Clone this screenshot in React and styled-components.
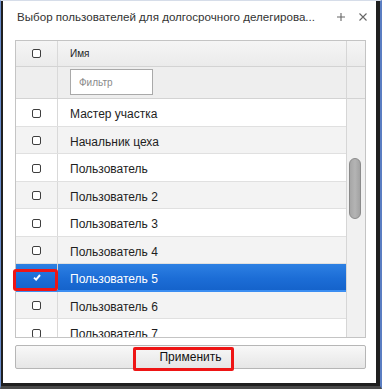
import React from 'react';
import styled, { createGlobalStyle } from 'styled-components';

const Global = createGlobalStyle`
  html, body { margin: 0; padding: 0; background: #fff; }
  body { font-family: "Liberation Sans", Arial, sans-serif; }
  *, *::before, *::after { box-sizing: border-box; }
`;

const Frame = styled.div`
  width: 382px;
  height: 389px;
  border-left: 1px solid #6a8dcc;
  border-top: 1px solid #d6dde9;
  border-right: 2px solid #5b7ec2;
  border-bottom: 3px solid #4a4a4a;
  background: #fff;
`;

const Window = styled.div`
  height: 100%;
  display: flex;
  flex-direction: column;
  border-left: 2px solid #1f1f1f;
  border-right: 4px solid #1f1f1f;
  border-bottom: 3px solid #1f1f1f;
  background: #fff;
`;

const TitleBar = styled.div`
  height: 39px;
  flex: none;
  display: flex;
  align-items: flex-start;
  padding: 8px 10px 0 14px;
`;

const Title = styled.div`
  flex: 1;
  font-size: 11.6px;
  line-height: 15px;
  color: #333;
  white-space: nowrap;
  overflow: hidden;
`;

const Tools = styled.div`
  display: flex;
  gap: 14px;
  padding-top: 4px;
  margin-right: -1px;
`;

const ToolIcon = styled.svg`
  width: 8px;
  height: 8px;
  display: block;
  stroke: #666;
  stroke-width: 1.1;
`;

const Grid = styled.div`
  margin: 0 10px 0 12px;
  height: 298px;
  flex: none;
  border: 1px solid #c4c4c4;
  display: flex;
  position: relative;
`;

const Main = styled.div`
  flex: 1;
  display: flex;
  flex-direction: column;
  border-right: 1px solid #d6d6d6;
  min-width: 0;
`;

const HeadRow = styled.div`
  height: 26px;
  flex: none;
  display: flex;
  background: linear-gradient(#f5f5f5, #ebebeb);
  border-bottom: 1px solid #d3d3d3;
`;

const FilterRow = styled.div`
  height: 32px;
  flex: none;
  display: flex;
  background: #eeeeee;
  border-bottom: 1px solid #d3d3d3;
`;

const CheckCell = styled.div`
  width: 42px;
  flex: none;
  display: flex;
  align-items: center;
  justify-content: center;
  border-right: 1px solid #d9d9d9;
  position: relative;
  padding-top: ${p => (p.$body ? '2px' : '0')};
`;

const NameCell = styled.div`
  flex: 1;
  display: flex;
  align-items: center;
  padding-left: 12px;
  font-size: ${p => (p.$head ? '10px' : '12px')};
  color: ${p => (p.$selected ? '#fff' : '#1e1e1e')};
  padding-top: ${p => (p.$head ? '0' : '4px')};
  white-space: nowrap;
`;

const FilterInput = styled.div`
  margin: 2px 0 0 12px;
  width: 83px;
  height: 26px;
  border: 1px solid #a9a9a9;
  background: #fff;
  font-size: 10px;
  color: #8a8a8a;
  display: flex;
  align-items: center;
  padding-left: 8px;
`;

const Body = styled.div`
  flex: 1;
  min-height: 0;
  clip-path: inset(0 -20px 0 -20px);
`;

const Row = styled.div`
  height: 27.5px;
  display: flex;
  border-bottom: ${p => (p.$selected ? '2px solid #3b8ef2' : '1px solid #e0e0e0')};
  background: ${p =>
    p.$selected
      ? 'linear-gradient(#2d80e3, #1c6dd6 55%, #1563cb)'
      : p.$odd
      ? '#f3f3f3'
      : '#ffffff'};
`;

const Box = styled.span`
  width: 9px;
  height: 9px;
  border: 1px solid #3e3e3e;
  border-radius: 2px;
  background: #fff;
  display: block;
`;

const Check = styled.svg`
  width: 8px;
  height: 7px;
  display: block;
  fill: none;
  stroke: #fff;
  stroke-width: 2;
`;

const Mark = styled.span`
  position: absolute;
  left: -3px;
  top: 5px;
  width: 45px;
  height: 22px;
  border: 3px solid #ee1515;
  border-radius: 3px;
  pointer-events: none;
`;

const ScrollCol = styled.div`
  width: 18px;
  flex: none;
  display: flex;
  flex-direction: column;
`;

const ScrollHead = styled.div`
  height: ${p => p.$h}px;
  flex: none;
  background: ${p => (p.$filter ? '#eeeeee' : 'linear-gradient(#f5f5f5, #ebebeb)')};
  border-bottom: 1px solid #d3d3d3;
`;

const Track = styled.div`
  flex: 1;
  background: #f1f1f1;
  padding: 59px 2px 0 2px;
`;

const Thumb = styled.div`
  height: 61px;
  width: 12px;
  border: 1px solid #8a8a8a;
  border-radius: 6px;
  background: linear-gradient(90deg, #a6a6a6, #b4b4b4 50%, #a2a2a2);
`;

const Footer = styled.div`
  padding: 7px 10px 0 12px;
`;

const Button = styled.div`
  position: relative;
  height: 24px;
  border: 1px solid #b6b6b6;
  border-radius: 2px;
  background: linear-gradient(#f8f8f8, #e6e6e6);
  display: flex;
  align-items: center;
  justify-content: center;
  font-size: 12px;
  color: #111;
`;

const ButtonMark = styled.span`
  position: absolute;
  left: 117px;
  top: 1px;
  width: 101px;
  height: 24px;
  border: 3px solid #ee1515;
  border-radius: 2px;
  pointer-events: none;
`;

const users = [
  'Мастер участка',
  'Начальник цеха',
  'Пользователь',
  'Пользователь 2',
  'Пользователь 3',
  'Пользователь 4',
  'Пользователь 5',
  'Пользователь 6',
  'Пользователь 7',
];

export default function App() {
  return (
    <>
      <Global />
      <Frame>
        <Window>
          <TitleBar>
            <Title>Выбор пользователей для долгосрочного делегирова...</Title>
            <Tools>
              <ToolIcon viewBox="0 0 8 8">
                <path d="M4 0V8M0 4H8" />
              </ToolIcon>
              <ToolIcon viewBox="0 0 8 8">
                <path d="M0.5 0.5L7.5 7.5M7.5 0.5L0.5 7.5" />
              </ToolIcon>
            </Tools>
          </TitleBar>
          <Grid>
            <Main>
              <HeadRow>
                <CheckCell>
                  <Box />
                </CheckCell>
                <NameCell $head>Имя</NameCell>
              </HeadRow>
              <FilterRow>
                <CheckCell />
                <FilterInput>Фильтр</FilterInput>
              </FilterRow>
              <Body>
                {users.map((u, i) => {
                  const selected = u === 'Пользователь 5';
                  return (
                    <Row key={u} $odd={i % 2 === 1} $selected={selected}>
                      <CheckCell $body>
                        {selected ? (
                          <>
                            <Check viewBox="0 0 8 7">
                              <path d="M1 3.6L3.1 5.6L7 1" />
                            </Check>
                            <Mark />
                          </>
                        ) : (
                          <Box />
                        )}
                      </CheckCell>
                      <NameCell $selected={selected}>{u}</NameCell>
                    </Row>
                  );
                })}
              </Body>
            </Main>
            <ScrollCol>
              <ScrollHead $h={26} />
              <ScrollHead $h={32} $filter />
              <Track>
                <Thumb />
              </Track>
            </ScrollCol>
          </Grid>
          <Footer>
            <Button>
              Применить
              <ButtonMark />
            </Button>
          </Footer>
        </Window>
      </Frame>
    </>
  );
}
